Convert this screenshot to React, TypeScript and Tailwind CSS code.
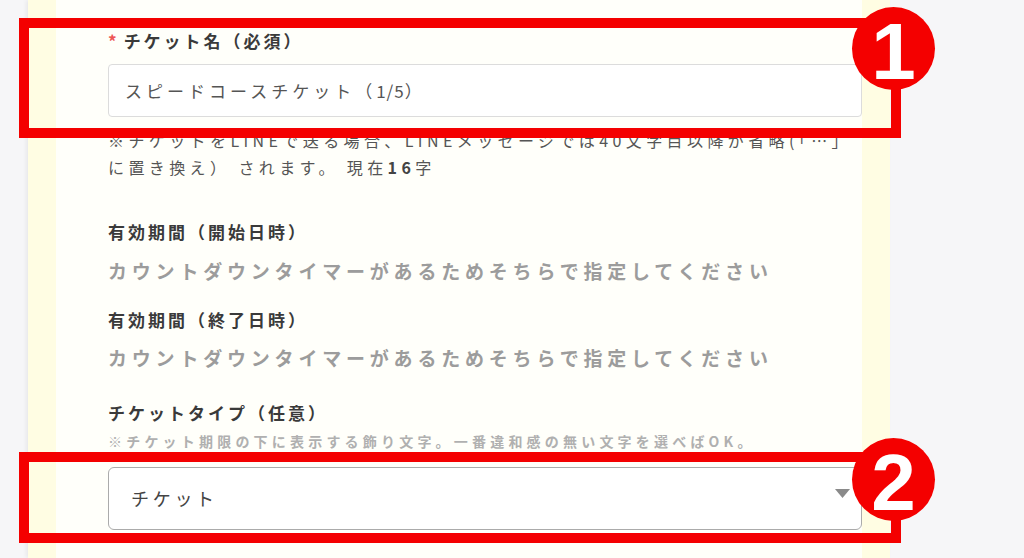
import React from "react";

const jp = "font-['Noto_Sans_CJK_JP','Noto_Sans',sans-serif]";
const label = "text-[17px] leading-[24px] font-bold tracking-[3px] text-[#3a3a3a]";
const notice = "text-[19px] leading-[30px] font-bold tracking-[4.8px] text-[#9c9c9c]";

function Frame({ top, height, num }: { top: string; height: string; num: string }) {
  return (
    <>
      <div
        className={`pointer-events-none absolute left-[19px] w-[882px] border-[10px] border-[#f40000] ${top} ${height}`}
      />
      <div
        className={`pointer-events-none absolute left-[852px] flex size-[83px] items-center justify-center rounded-full bg-[#f40000] ${
          num === "1" ? "top-[7px]" : "top-[438px]"
        }`}
      >
        <span className="mt-[6px] font-['Liberation_Sans',Arial,sans-serif] text-[80px] leading-none font-bold text-white">
          {num}
        </span>
      </div>
    </>
  );
}

export default function App() {
  return (
    <div className={`relative flex h-[558px] w-[1024px] overflow-hidden bg-[#f6f6f8] ${jp}`}>
      <div className="w-[28px] shrink-0" />
      <div className="flex w-[862px] shrink-0 bg-[#fffde3] px-[28px] shadow-[-2px_0_4px_rgba(0,0,0,0.06)]">
        <div className="flex w-full flex-col bg-[#fffffa] pt-[29px] pl-[52px]">
          {/* チケット名 */}
          <div className={`flex h-[24px] items-center ${label}`}>
            <span className="mr-[7px] text-[#ee5555] tracking-normal">*</span>
            チケット名（必須）
          </div>
          <div className="mt-[11px] flex h-[53px] items-center rounded-[4px] border border-[#dcdcdc] bg-white px-[16px] text-[17px] tracking-[4px] text-[#555]">
            スピードコースチケット（<span className="tracking-[1px]">1/5</span>）
          </div>
          <p className="mt-[10px] text-[16px] leading-[27px] tracking-[4.4px] whitespace-nowrap text-[#555]">
            ※チケットをLINEで送る場合、LINEメッセージでは40文字目以降が省略(「…」
            <br />
            に置き換え） されます。 現在<span className="font-bold text-[#444]">16</span>字
          </p>

          {/* 有効期間 */}
          <div className={`mt-[39px] ${label}`}>有効期間（開始日時）</div>
          <div className={`mt-[12px] ${notice}`}>
            カウントダウンタイマーがあるためそちらで指定してください
          </div>
          <div className={`mt-[22px] ${label}`}>有効期間（終了日時）</div>
          <div className={`mt-[11px] ${notice}`}>
            カウントダウンタイマーがあるためそちらで指定してください
          </div>

          {/* チケットタイプ */}
          <div className={`mt-[28px] ${label}`}>チケットタイプ（任意）</div>
          <div className="mt-[6px] text-[14px] leading-[20px] font-bold tracking-[4.2px] text-[#b0b0b0]">
            ※チケット期限の下に表示する飾り文字。一番違和感の無い文字を選べばOK。
          </div>
          <div className="mt-[16px] flex h-[63px] items-center justify-between rounded-[6px] border border-[#ababab] bg-white pr-[11px] pl-[22px]">
            <span className="text-[18px] tracking-[3.7px] text-[#444]">チケット</span>
            <svg width="15" height="9" viewBox="0 0 15 9" className="mb-[10px]">
              <polygon points="0,0 15,0 7.5,9" fill="#8a8a8a" />
            </svg>
          </div>
        </div>
      </div>

      <Frame top="top-[18px]" height="h-[120px]" num="1" />
      <Frame top="top-[452px]" height="h-[91px]" num="2" />
    </div>
  );
}
